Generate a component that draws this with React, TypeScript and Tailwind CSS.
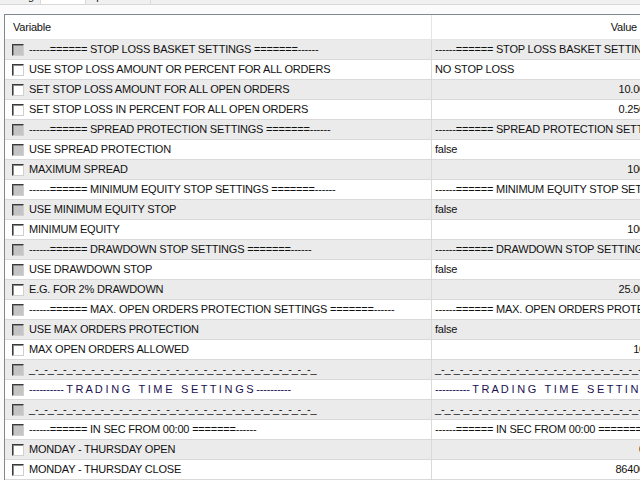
import React from 'react';

type Row = {
  name: string;
  value: string;
  kind: 'group' | 'bool' | 'plain';
  align?: 'left' | 'right';
  spaced?: boolean;
};

const DASH_LINE = '_-'.repeat(30) + '_';
const TRADING = '---------- T R A D I N G   T I M E   S E T T I N G S ----------';

const ROWS: Row[] = [
  { name: '------====== STOP LOSS BASKET SETTINGS =======------', value: '------====== STOP LOSS BASKET SETTINGS =======------', kind: 'group' },
  { name: 'USE STOP LOSS AMOUNT OR PERCENT FOR ALL ORDERS', value: 'NO STOP LOSS', kind: 'plain' },
  { name: 'SET STOP LOSS AMOUNT FOR ALL OPEN ORDERS', value: '10.00', kind: 'plain', align: 'right' },
  { name: 'SET STOP LOSS IN PERCENT FOR ALL OPEN ORDERS', value: '0.250', kind: 'plain', align: 'right' },
  { name: '------====== SPREAD PROTECTION SETTINGS =======------', value: '------====== SPREAD PROTECTION SETTINGS =======------', kind: 'group' },
  { name: 'USE SPREAD PROTECTION', value: 'false', kind: 'bool' },
  { name: 'MAXIMUM SPREAD', value: '100', kind: 'plain', align: 'right' },
  { name: '------====== MINIMUM EQUITY STOP SETTINGS =======------', value: '------====== MINIMUM EQUITY STOP SETTINGS =======------', kind: 'group' },
  { name: 'USE MINIMUM EQUITY STOP', value: 'false', kind: 'bool' },
  { name: 'MINIMUM EQUITY', value: '100', kind: 'plain', align: 'right' },
  { name: '------====== DRAWDOWN STOP SETTINGS =======------', value: '------====== DRAWDOWN STOP SETTINGS =======------', kind: 'group' },
  { name: 'USE DRAWDOWN STOP', value: 'false', kind: 'bool' },
  { name: 'E.G. FOR 2% DRAWDOWN', value: '25.00', kind: 'plain', align: 'right' },
  { name: '------====== MAX. OPEN ORDERS PROTECTION SETTINGS =======------', value: '------====== MAX. OPEN ORDERS PROTECTION SETTINGS =======------', kind: 'group' },
  { name: 'USE MAX ORDERS PROTECTION', value: 'false', kind: 'bool' },
  { name: 'MAX OPEN ORDERS ALLOWED', value: '10', kind: 'plain', align: 'right' },
  { name: DASH_LINE, value: DASH_LINE, kind: 'group' },
  { name: TRADING, value: TRADING, kind: 'group', spaced: true },
  { name: DASH_LINE, value: DASH_LINE, kind: 'group' },
  { name: '------====== IN SEC FROM 00:00 =======------', value: '------====== IN SEC FROM 00:00 =======------', kind: 'group' },
  { name: 'MONDAY - THURSDAY OPEN', value: '0', kind: 'plain', align: 'right' },
  { name: 'MONDAY - THURSDAY CLOSE', value: '86400', kind: 'plain', align: 'right' },
];

const CheckBox: React.FC<{ grey: boolean }> = ({ grey }) => (
  <div
    className={`w-[12px] h-[12px] shrink-0 border border-t-[#3a3a3a] border-l-[#3a3a3a] border-r-[#d0d0d0] border-b-[#d0d0d0] shadow-[inset_1px_1px_0_#8a8a8a] ${
      grey ? 'bg-[#c4c4c4]' : 'bg-white'
    }`}
  />
);

const App: React.FC = () => {
  return (
    <div
      className="w-[640px] h-[480px] overflow-hidden bg-[#fbfbfb] text-[11px] tracking-[-0.2px] text-[#111]"
      style={{ fontFamily: '"Liberation Sans", Arial, sans-serif' }}
    >
      {/* tab strip, only its lower edge is visible */}
      <div className="h-[5px] overflow-hidden flex border-b border-[#d9d9d9] bg-[#f0f0f0]">
        <div className="w-[41px] border-r border-[#d9d9d9] flex items-end justify-end pr-[6px]">
          <span className="leading-[13px] mb-[1px]">Testing</span>
        </div>
        <div className="w-[45px] bg-white border-r border-[#d9d9d9] flex items-end pl-[6px]">
          <span className="leading-[13px] mb-[6px]">Inputs</span>
        </div>
        <div className="w-[65px] border-r border-[#d9d9d9] flex items-end pl-[2px]">
          <span className="leading-[13px] mb-[1px]">Optimization</span>
        </div>
        <div className="flex-1" />
      </div>

      <div className="pt-[9px] pl-[4px]">
        <div className="w-[680px] border-l border-t border-[#828790] bg-white">
          {/* header */}
          <div className="flex h-[25px] border-b border-[#e5e5e5]">
            <div className="w-[427px] border-r border-[#e5e5e5] flex items-center pl-[8px]">Variable</div>
            <div className="w-[211px] flex items-center justify-end pr-[6px]">Value</div>
          </div>

          {ROWS.map((r, i) => (
            <div
              key={i}
              className={`flex h-[20px] border-b border-[#d9d9d9] ${i % 2 === 0 ? 'bg-[#ebebeb]' : 'bg-white'}`}
            >
              <div className="w-[427px] shrink-0 border-r border-[#d9d9d9] flex items-center pl-[7px] gap-[5px] overflow-hidden whitespace-pre">
                <CheckBox grey={r.kind !== 'plain'} />
                <span className={r.spaced ? 'text-[#1a1050]' : ''}>{r.name}</span>
              </div>
              <div
                className={`w-[215px] shrink-0 flex items-center overflow-hidden whitespace-pre ${
                  r.align === 'right' ? 'justify-end pr-[2px]' : 'pl-[3px]'
                }`}
              >
                <span className={r.spaced ? 'text-[#1a1050]' : ''}>{r.value}</span>
              </div>
            </div>
          ))}
        </div>
      </div>
    </div>
  );
};

export default App;
